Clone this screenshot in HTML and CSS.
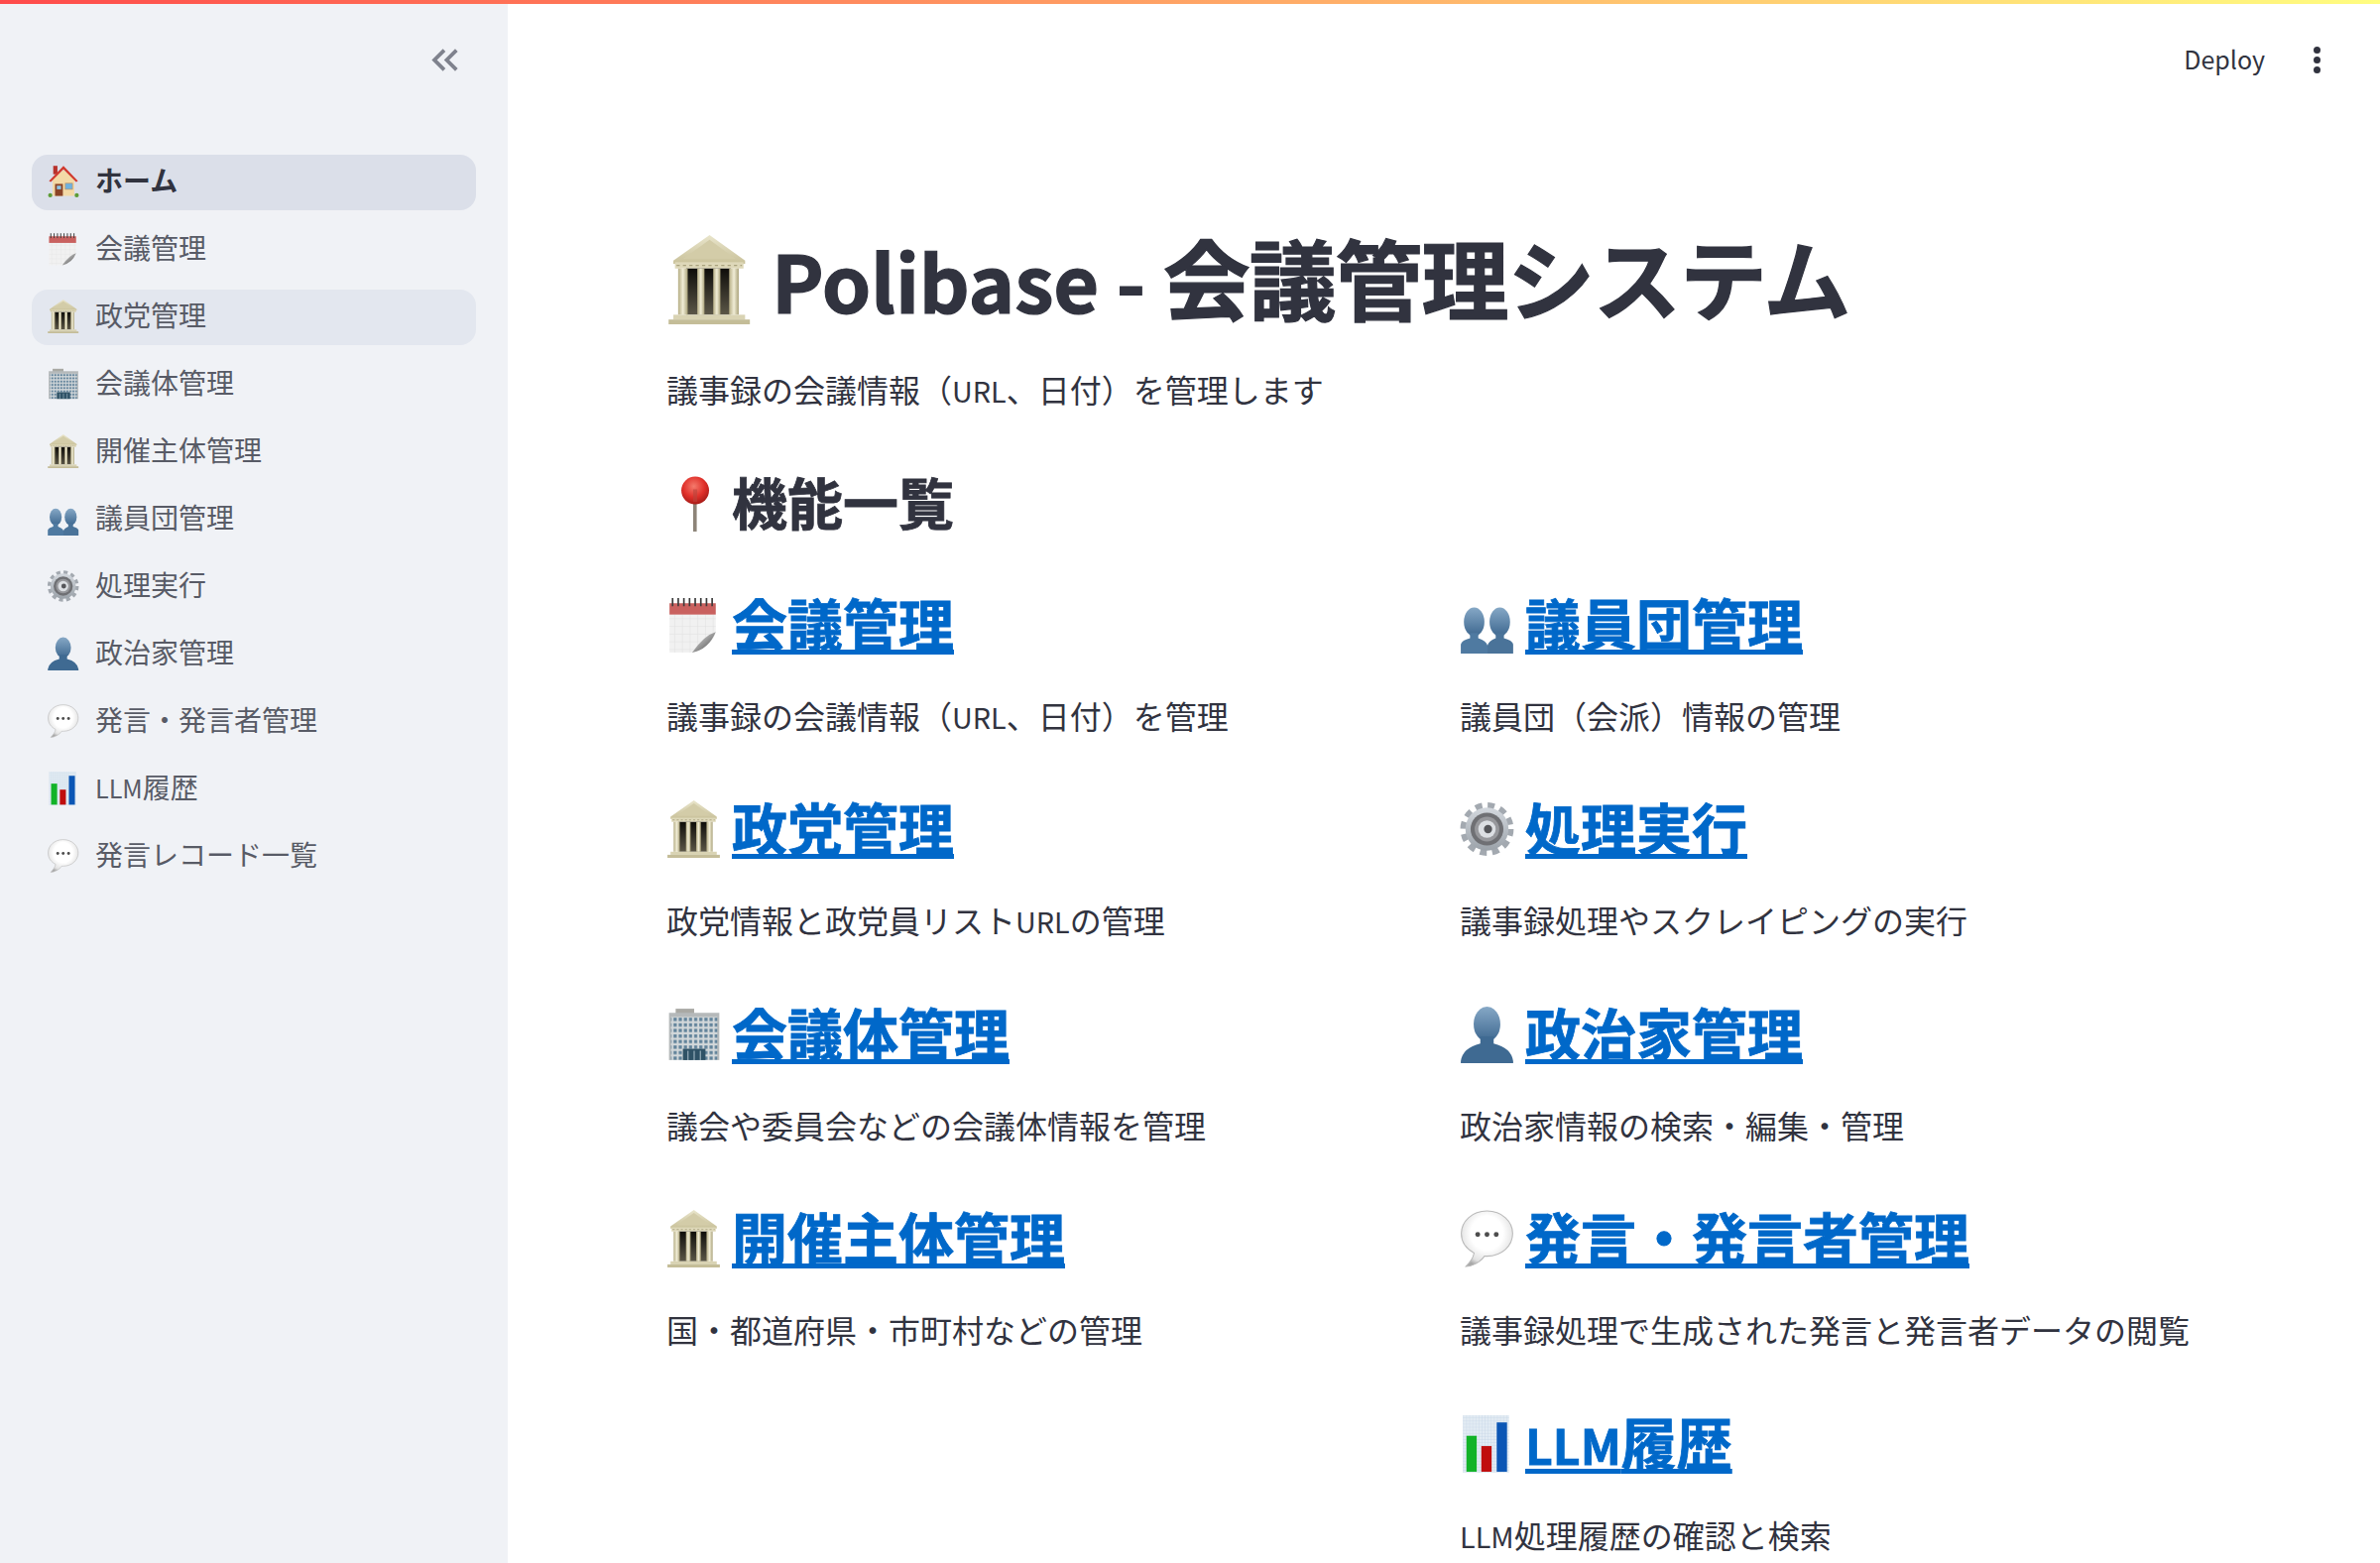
FILE: index.html
```html
<!DOCTYPE html>
<html lang="ja">
<head>
  <meta charset="UTF-8">
  <meta name="viewport" content="width=device-width, initial-scale=1.0">
  <title>Polibase</title>
  <link rel="stylesheet" href="styles.css">
</head>
<body>
  <!-- Emoji drawn once, reused with <use>. All in a 52x56 box -->
  <svg class="sprites" aria-hidden="true">
    <defs>
      <linearGradient id="stone" x1="0" y1="0" x2="0" y2="1">
        <stop offset="0" stop-color="#e9e5cb"/>
        <stop offset="1" stop-color="#c9c19a"/>
      </linearGradient>
      <linearGradient id="column" x1="0" y1="0" x2="1" y2="0">
        <stop offset="0" stop-color="#b5ad85"/>
        <stop offset=".5" stop-color="#f1edd6"/>
        <stop offset="1" stop-color="#aaa27a"/>
      </linearGradient>
      <linearGradient id="shade" x1="0" y1="0" x2="0" y2="1">
        <stop offset="0" stop-color="#0e0d0a"/>
        <stop offset="1" stop-color="#5b5647"/>
      </linearGradient>
      <linearGradient id="bust" x1="0" y1="0" x2="0" y2="1">
        <stop offset="0" stop-color="#86a8c6"/>
        <stop offset="1" stop-color="#3e6890"/>
      </linearGradient>
      <linearGradient id="curl" x1="0" y1="0" x2="1" y2="1">
        <stop offset="0" stop-color="#f4f4f4"/>
        <stop offset="1" stop-color="#3f3f3f"/>
      </linearGradient>
      <linearGradient id="steel" x1="0" y1="0" x2="0" y2="1">
        <stop offset="0" stop-color="#d3d8de"/>
        <stop offset="1" stop-color="#9ba2a9"/>
      </linearGradient>
      <radialGradient id="bubble" cx=".5" cy=".4" r=".62">
        <stop offset=".5" stop-color="#ffffff"/>
        <stop offset=".85" stop-color="#e2e2e2"/>
        <stop offset="1" stop-color="#a8a8a8"/>
      </radialGradient>
      <radialGradient id="pinhead" cx=".45" cy=".35" r=".65">
        <stop offset="0" stop-color="#f47a6c"/>
        <stop offset=".6" stop-color="#e0302a"/>
        <stop offset="1" stop-color="#a81c18"/>
      </radialGradient>
      <pattern id="sheetgrid" width="7.5" height="7.5" patternUnits="userSpaceOnUse">
        <path d="M7.5 0V7.5H0" fill="none" stroke="#dcdcdc" stroke-width=".8"/>
      </pattern>
      <pattern id="chartgrid" width="3" height="3" patternUnits="userSpaceOnUse">
        <path d="M3 0V3H0" fill="none" stroke="#c6d6e6" stroke-width=".7"/>
      </pattern>
      <pattern id="windows" width="5" height="5.4" patternUnits="userSpaceOnUse">
        <rect width="5" height="5.4" fill="#d3d8da"/>
        <rect x="1" y="1" width="3" height="3.2" fill="#5f8199"/>
      </pattern>
    </defs>

    <symbol id="temple" viewBox="0 0 52 56">
      <path d="M25.700 0 48 16v2H3v-2z" fill="url(#stone)"/>
      <path d="M25.700 3 42 15H9z" fill="#d3cca8"/>
      <rect x="4" y="17" width="43" height="4" fill="#ded8b9"/>
      <path d="M5 19H46" stroke="#a9a27e" stroke-width=".8" stroke-dasharray="2 2"/>
      <rect x="11" y="21" width="28" height="29" fill="url(#shade)"/>
      <rect x="6" y="21" width="6" height="29" fill="url(#column)"/>
      <rect x="18" y="21" width="4.500" height="29" fill="url(#column)"/>
      <rect x="28" y="21" width="4.500" height="29" fill="url(#column)"/>
      <rect x="38" y="21" width="6" height="29" fill="url(#column)"/>
      <rect x="3" y="50" width="45" height="3" fill="#d9d3b3"/>
      <rect x="0" y="53" width="51" height="3" fill="#c4bd98"/>
    </symbol>

    <symbol id="calendar" viewBox="0 0 52 56">
      <path d="M2 7H47V35Q44 48 24 55H2z" fill="#f1f1f1"/>
      <path d="M2 18H47V35Q44 48 24 55H2z" fill="url(#sheetgrid)"/>
      <rect x="2" y="7" width="45" height="11" fill="#c9615f"/>
      <path d="M5 2V10M10.500 2V10M16 2V10M21.500 2V10M27 2V10M32.500 2V10M38 2V10M43.500 2V10" stroke="#3a3a3a" stroke-width="1.600"/>
      <path d="M47 35Q36 38 24 55Q40 52 47 35z" fill="url(#curl)"/>
    </symbol>

    <symbol id="office" viewBox="0 0 52 56">
      <rect x="8" y="3" width="18" height="6" fill="#a9a9a4"/>
      <rect x="1.500" y="7" width="49" height="46" fill="#b5b9ba"/>
      <rect x="3.500" y="11" width="45" height="42" fill="url(#windows)"/>
      <rect x="15" y="42" width="22" height="11" fill="#2f5266"/>
      <path d="M20 44V53M26 44V53M32 44V53" stroke="#a8bcc8" stroke-width="1"/>
    </symbol>

    <symbol id="busts" viewBox="0 0 52 56">
      <ellipse cx="13" cy="25" rx="10" ry="14" fill="url(#bust)"/>
      <ellipse cx="38" cy="25" rx="10" ry="14" fill="url(#bust)"/>
      <path d="M9 36H17V41Q25 44 26 48V56H0V47Q1 43 9 41z" fill="#4f7aa1"/>
      <path d="M34 36H42V41Q50 43 51 47V56H26V48Q27 44 34 41z" fill="#4a7399"/>
    </symbol>

    <symbol id="gear" viewBox="0 0 52 56">
      <circle cx="25.500" cy="28" r="22.500" fill="none" stroke="#a3a9b0" stroke-width="7" stroke-dasharray="6.500 5.280"/>
      <circle cx="25.500" cy="28" r="21" fill="url(#steel)"/>
      <circle cx="25.500" cy="28" r="16" fill="#6f7074"/>
      <circle cx="25.500" cy="28" r="12" fill="#97989c"/>
      <circle cx="25.500" cy="28" r="8.500" fill="#dcdfe3"/>
      <circle cx="26.500" cy="28" r="4" fill="#55565a"/>
    </symbol>

    <symbol id="person" viewBox="0 0 52 56">
      <ellipse cx="25.500" cy="18" rx="13" ry="17" fill="url(#bust)"/>
      <path d="M19 30H32V37Q49 41 51 54V56H0V54Q2 41 19 37z" fill="#3f6a92"/>
    </symbol>

    <symbol id="balloon" viewBox="0 0 52 56">
      <path d="M25.500 1C11 1 .5 11 .5 23c0 9 5 15 12.500 19-1 5-5 10-8 13 6 0 14-4 18-10h2.500C40 45 50.500 35 50.500 23S40 1 25.500 1z" fill="url(#bubble)" stroke="#b9b9b9" stroke-width="1"/>
      <circle cx="16.500" cy="24" r="2.400" fill="#4d4d4d"/>
      <circle cx="25.500" cy="24" r="2.400" fill="#4d4d4d"/>
      <circle cx="34.500" cy="24" r="2.400" fill="#4d4d4d"/>
    </symbol>

    <symbol id="chart" viewBox="0 0 52 56">
      <rect x="2" y="0" width="45" height="56" fill="#e2ebf3"/>
      <rect x="2" y="0" width="45" height="56" fill="url(#chartgrid)"/>
      <rect x="5.500" y="20" width="10" height="35" fill="#12b328"/>
      <rect x="20" y="30" width="10" height="25" fill="#c00d0d"/>
      <rect x="35" y="7" width="10" height="48" fill="#0b56b5"/>
    </symbol>

    <symbol id="house" viewBox="0 0 52 56">
      <rect x="9" y="2" width="7" height="14" fill="#b8322c"/>
      <path d="M8 24 26 9l18 15v28H8z" fill="#f3d9a6"/>
      <path d="M2 27 26 2l24 25-3 2L26 8 5 29z" fill="#d13a2e"/>
      <rect x="12" y="32" width="13" height="20" fill="#8a4326"/>
      <rect x="15" y="35" width="7" height="6" fill="#8fc6e8"/>
      <rect x="29" y="31" width="12" height="10" fill="#6eb2e0" stroke="#b98a5c"/>
      <circle cx="4" cy="51" r="3.500" fill="#5d9c36"/>
      <circle cx="48" cy="51" r="3.500" fill="#5d9c36"/>
    </symbol>

    <symbol id="pin" viewBox="0 0 52 56">
      <rect x="25" y="22" width="3.500" height="33" fill="#8d8478"/>
      <circle cx="27" cy="15" r="13.500" fill="url(#pinhead)"/>
      <rect x="25" y="14" width="4" height="12" fill="#b8443c" opacity=".6"/>
    </symbol>
  </svg>

  <div class="topbar"></div>

  <div class="app">
    <aside class="sidebar">
      <div class="sidebar-head">
        <svg class="collapse" viewBox="0 0 24 24"><path d="M17.590 18 19 16.590 14.420 12 19 7.410 17.590 6l-6 6zM11 18l1.410-1.410L7.830 12l4.580-4.590L11 6l-6 6z"/></svg>
      </div>
      <nav class="nav">
        <a class="nav-item active" href="#"><svg class="emoji"><use href="#house"/></svg>ホーム</a>
        <a class="nav-item" href="#"><svg class="emoji"><use href="#calendar"/></svg>会議管理</a>
        <a class="nav-item hover" href="#"><svg class="emoji"><use href="#temple"/></svg>政党管理</a>
        <a class="nav-item" href="#"><svg class="emoji"><use href="#office"/></svg>会議体管理</a>
        <a class="nav-item" href="#"><svg class="emoji"><use href="#temple"/></svg>開催主体管理</a>
        <a class="nav-item" href="#"><svg class="emoji"><use href="#busts"/></svg>議員団管理</a>
        <a class="nav-item" href="#"><svg class="emoji"><use href="#gear"/></svg>処理実行</a>
        <a class="nav-item" href="#"><svg class="emoji"><use href="#person"/></svg>政治家管理</a>
        <a class="nav-item" href="#"><svg class="emoji"><use href="#balloon"/></svg>発言・発言者管理</a>
        <a class="nav-item" href="#"><svg class="emoji"><use href="#chart"/></svg><span><span class="latin">LLM</span>履歴</span></a>
        <a class="nav-item" href="#"><svg class="emoji"><use href="#balloon"/></svg>発言レコード一覧</a>
      </nav>
    </aside>

    <div class="main">
      <header class="toolbar">
        <span class="deploy">Deploy</span>
        <span class="kebab"><i></i><i></i><i></i></span>
      </header>

      <main class="content">
        <h1 class="page-title"><svg class="emoji-big"><use href="#temple"/></svg><span><span class="latin">Polibase - </span>会議管理システム</span></h1>
        <p class="text lead">議事録の会議情報（<span class="latin">URL</span>、日付）を管理します</p>
        <h2 class="section-title"><svg class="emoji-mid"><use href="#pin"/></svg>機能一覧</h2>

        <div class="columns">
          <div class="column">
            <section class="feature">
              <h3 class="feature-title"><svg class="emoji-mid"><use href="#calendar"/></svg><a href="#">会議管理</a></h3>
              <p class="text">議事録の会議情報（<span class="latin">URL</span>、日付）を管理</p>
            </section>
            <section class="feature">
              <h3 class="feature-title"><svg class="emoji-mid"><use href="#temple"/></svg><a href="#">政党管理</a></h3>
              <p class="text">政党情報と政党員リスト<span class="latin">URL</span>の管理</p>
            </section>
            <section class="feature">
              <h3 class="feature-title"><svg class="emoji-mid"><use href="#office"/></svg><a href="#">会議体管理</a></h3>
              <p class="text">議会や委員会などの会議体情報を管理</p>
            </section>
            <section class="feature">
              <h3 class="feature-title"><svg class="emoji-mid"><use href="#temple"/></svg><a href="#">開催主体管理</a></h3>
              <p class="text">国・都道府県・市町村などの管理</p>
            </section>
          </div>
          <div class="column">
            <section class="feature">
              <h3 class="feature-title"><svg class="emoji-mid"><use href="#busts"/></svg><a href="#">議員団管理</a></h3>
              <p class="text">議員団（会派）情報の管理</p>
            </section>
            <section class="feature">
              <h3 class="feature-title"><svg class="emoji-mid"><use href="#gear"/></svg><a href="#">処理実行</a></h3>
              <p class="text">議事録処理やスクレイピングの実行</p>
            </section>
            <section class="feature">
              <h3 class="feature-title"><svg class="emoji-mid"><use href="#person"/></svg><a href="#">政治家管理</a></h3>
              <p class="text">政治家情報の検索・編集・管理</p>
            </section>
            <section class="feature">
              <h3 class="feature-title"><svg class="emoji-mid"><use href="#balloon"/></svg><a href="#">発言・発言者管理</a></h3>
              <p class="text">議事録処理で生成された発言と発言者データの閲覧</p>
            </section>
            <section class="feature">
              <h3 class="feature-title"><svg class="emoji-mid"><use href="#chart"/></svg><a href="#"><span class="latin">LLM</span>履歴</a></h3>
              <p class="text"><span class="latin">LLM</span>処理履歴の確認と検索</p>
            </section>
          </div>
        </div>
      </main>
    </div>
  </div>
</body>
</html>
```

FILE: styles.css
```css
html, body {
  height: 100%;
  margin: 0;
  padding: 0;
  overflow: hidden;
}
body {
  background-color: #ffffff;
  color: #31333f;
  font-family: "Noto Sans CJK JP", "Noto Sans", sans-serif;
  display: flex;
  flex-direction: column;
}
.sprites {
  position: absolute;
  width: 0;
  height: 0;
}
.topbar {
  height: 4px;
  flex: none;
  background: linear-gradient(90deg, #ff4b4b, #fffd80);
}
.app {
  flex: 1;
  display: flex;
  min-height: 0;
}
/* latin glyphs of the CJK font run about 10% bigger than the reference */
.latin {
  font-size: 0.9em;
  line-height: 1;
}

/* sidebar */
.sidebar {
  width: 512px;
  flex: none;
  background-color: #f0f2f6;
}
.sidebar-head {
  height: 152px;
  display: flex;
  justify-content: flex-end;
  align-items: flex-start;
  padding-right: 41px;
  box-sizing: border-box;
}
.collapse {
  width: 45px;
  height: 45px;
  margin-top: 34px;
  fill: #7f828d;
}
.nav {
  display: flex;
  flex-direction: column;
  gap: 12px;
  margin: 0 32px;
}
.nav-item {
  height: 56px;
  box-sizing: border-box;
  display: flex;
  align-items: center;
  gap: 16px;
  padding: 0 0 6px 16px;
  border-radius: 16px;
  font-size: 28px;
  color: #585b66;
  text-decoration: none;
}
.nav-item.active {
  background-color: #dbdfe9;
  color: #31333f;
  font-weight: 700;
}
.nav-item.hover {
  background-color: #e3e7ef;
}
.emoji {
  width: 32px;
  height: 34px;
  flex: none;
  margin-top: 4px;
}

/* main area */
.main {
  flex: 1;
  min-width: 0;
}
.toolbar {
  height: 112px;
  display: flex;
  justify-content: flex-end;
  align-items: center;
  gap: 49px;
  padding-right: 60px;
  box-sizing: border-box;
  font-size: 25px;
}
.deploy {
  padding-bottom: 2px;
}
.kebab {
  display: flex;
  flex-direction: column;
  gap: 3px;
}
.kebab i {
  width: 7px;
  height: 7px;
  border-radius: 50%;
  background-color: #31333f;
}
.content {
  padding: 122px 160px 0;
}
.page-title {
  display: flex;
  align-items: center;
  gap: 18px;
  height: 88px;
  box-sizing: border-box;
  padding-bottom: 8px;
  margin: 0;
  font-size: 88px;
  font-weight: 700;
  line-height: 88px;
  letter-spacing: -0.013em;
  white-space: nowrap;
  -webkit-text-stroke: 1.2px #31333f;
}
.page-title .latin {
  letter-spacing: -0.002em;
}
.emoji-big {
  width: 88px;
  height: 90px;
  flex: none;
  margin-top: 8px;
}
.text {
  margin: 0;
  font-size: 32px;
  line-height: 48px;
  position: relative;
  top: -2px;
}
.lead {
  margin-top: 44px;
}
.section-title, .feature-title {
  display: flex;
  align-items: center;
  gap: 10px;
  height: 56px;
  box-sizing: border-box;
  padding-bottom: 6px;
  margin: 0;
  font-size: 56px;
  font-weight: 700;
  line-height: 56px;
  white-space: nowrap;
  -webkit-text-stroke: 0.8px;
}
.section-title {
  margin-top: 62px;
}
.emoji-mid {
  width: 56px;
  height: 58px;
  flex: none;
  margin-top: 6px;
}
.columns {
  display: grid;
  grid-template-columns: 1fr 1fr;
  gap: 32px;
  margin-top: 65.5px;
}
.column {
  display: flex;
  flex-direction: column;
  gap: 61.5px;
}
.feature-title a {
  color: #0068c9;
  text-decoration: underline;
  text-decoration-thickness: 5px;
  text-underline-offset: 4px;
  text-decoration-skip-ink: none;
}
.feature-title .latin {
  font-size: 0.86em;
}
.feature .text {
  margin-top: 41px;
}
```
